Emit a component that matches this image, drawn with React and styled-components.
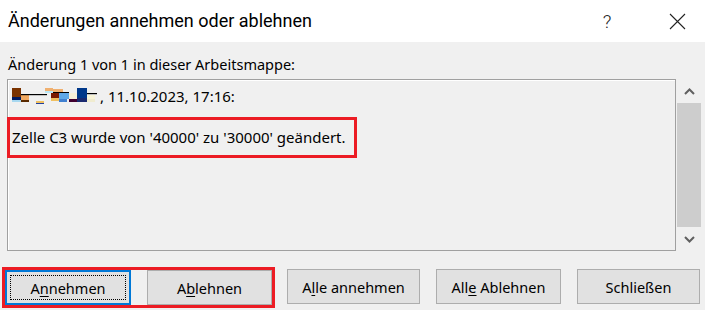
import styled, { createGlobalStyle } from "styled-components";

const GlobalStyle = createGlobalStyle`
    html, body {
        margin: 0;
        padding: 0;
        background: #f0f0f0;
    }
    * {
        box-sizing: border-box;
    }
`;

const RED = "#ec1c24";

const App = () => {
    return (
        <Dialog>
            <GlobalStyle />
            <TitleBar>
                <Title>Änderungen annehmen oder ablehnen</Title>
                <CaptionButtons>
                    <CaptionButton>?</CaptionButton>
                    <CaptionButton>
                        <svg width="17" height="17" viewBox="0 0 17 17">
                            <path d="M1 1 L16 16 M16 1 L1 16" stroke="#222" strokeWidth="1.1" fill="none" />
                        </svg>
                    </CaptionButton>
                </CaptionButtons>
            </TitleBar>

            <Body>
                <Label>Änderung 1 von 1 in dieser Arbeitsmappe:</Label>
                <ListArea>
                    <ChangeBox>
                        <AuthorLine>
                            <Redacted />
                            <span>, 11.10.2023, 17:16:</span>
                        </AuthorLine>
                        <Highlight>Zelle C3 wurde von '40000' zu '30000' geändert.</Highlight>
                    </ChangeBox>
                    <ScrollBar>
                        <ArrowButton>
                            <svg width="11" height="7" viewBox="0 0 11 7">
                                <path d="M1 6 L5.5 1.5 L10 6" stroke="#606060" strokeWidth="2" fill="none" />
                            </svg>
                        </ArrowButton>
                        <Thumb />
                        <ArrowButton>
                            <svg width="11" height="7" viewBox="0 0 11 7">
                                <path d="M1 1 L5.5 5.5 L10 1" stroke="#606060" strokeWidth="2" fill="none" />
                            </svg>
                        </ArrowButton>
                    </ScrollBar>
                </ListArea>

                <ButtonRow>
                    <MarkedGroup>
                        <Button $w={126} $focused>
                            A<u>n</u>nehmen
                        </Button>
                        <Button $w={125}>
                            A<u>b</u>lehnen
                        </Button>
                    </MarkedGroup>
                    <Button $w={133} $ml={12} $top={2}>
                        A<u>l</u>le annehmen
                    </Button>
                    <Button $w={125} $ml={16} $top={2}>
                        All<u>e</u> Ablehnen
                    </Button>
                    <Button $w={123} $ml={16} $top={2}>
                        Schließen
                    </Button>
                </ButtonRow>
            </Body>
        </Dialog>
    );
};

// pixelated, censored author name
const Redacted = () => (
    <RedactedSvg width="88" height="16" viewBox="0 0 88 16">
        <rect x="0" y="0" width="9" height="9" fill="#7a3300" />
        <rect x="0" y="9" width="9" height="3" fill="#001a60" />
        <rect x="0" y="12" width="9" height="2" fill="#a8d8f0" />
        <rect x="9" y="6" width="8" height="6" fill="#f0a860" />
        <rect x="9" y="12" width="8" height="2" fill="#5a2a00" />
        <rect x="9" y="6" width="26" height="1.2" fill="#000" />
        <rect x="24" y="13" width="8" height="2" fill="#f0c060" />
        <rect x="24" y="15" width="8" height="1" fill="#2040a0" />
        <rect x="33" y="0" width="8" height="3" fill="#f0b070" />
        <rect x="33" y="3" width="8" height="2" fill="#b8e8f8" />
        <rect x="41" y="1" width="10" height="3" fill="#f0b070" />
        <rect x="41" y="4" width="16" height="1.2" fill="#000" />
        <rect x="39" y="5" width="8" height="5" fill="#7a1a00" />
        <rect x="47" y="5" width="10" height="6" fill="#60a8e8" />
        <rect x="39" y="10" width="8" height="3" fill="#f0c060" />
        <rect x="47" y="11" width="8" height="3" fill="#4080d0" />
        <rect x="57" y="5" width="8" height="6" fill="#f8f0d8" />
        <rect x="57" y="11" width="8" height="3" fill="#400030" />
        <rect x="65" y="0" width="10" height="10" fill="#00388a" />
        <rect x="65" y="10" width="10" height="4" fill="#1a2a70" />
        <rect x="75" y="5" width="10" height="1.2" fill="#000" />
        <rect x="75" y="7" width="8" height="4" fill="#f8f4d8" />
        <rect x="75" y="11" width="8" height="3" fill="#f0ecd0" />
    </RedactedSvg>
);

const Dialog = styled.div`
    width: 705px;
    height: 310px;
    background: #f0f0f0;
    font-family: "Segoe UI", "Noto Sans", sans-serif;
    color: #000;
    overflow: hidden;
`;

const TitleBar = styled.div`
    height: 42px;
    background: #ffffff;
    display: flex;
    align-items: center;
    justify-content: space-between;
    padding-left: 8px;
`;

const Title = styled.div`
    font-family: "Roboto", sans-serif;
    font-size: 18px;
    font-weight: 400;
    color: #000;
    white-space: nowrap;
    padding-bottom: 2px;
`;

const CaptionButtons = styled.div`
    display: flex;
    gap: 24px;
    padding-right: 5px;
`;

const CaptionButton = styled.div`
    width: 46px;
    height: 40px;
    display: flex;
    align-items: center;
    justify-content: center;
    font-family: "Roboto", sans-serif;
    font-weight: 300;
    font-size: 19px;
    color: #222;
`;

const Body = styled.div`
    padding: 0 4px 0 2px;
`;

const Label = styled.div`
    font-size: 14.5px;
    line-height: 20px;
    padding: 12px 0 0 6px;
    height: 37px;
`;

const ListArea = styled.div`
    display: flex;
    gap: 1px;
    padding-left: 5px;
    height: 172px;
`;

const ChangeBox = styled.div`
    width: 670px;
    height: 172px;
    border: 1px solid #a0a0a0;
    box-shadow: inset 1px 1px 0 #ffffff;
    padding-top: 7px;
`;

const AuthorLine = styled.div`
    display: flex;
    align-items: center;
    height: 17px;
    padding-left: 4px;
    font-size: 15px;
`;

const RedactedSvg = styled.svg`
    display: block;
`;

const Highlight = styled.div`
    display: inline-block;
    margin: 13px 0 0 -1px;
    border: 3px solid ${RED};
    padding: 0 8px 0 2px;
    height: 41px;
    line-height: 35px;
    font-size: 15px;
`;

const ScrollBar = styled.div`
    width: 24px;
    display: flex;
    flex-direction: column;
`;

const ArrowButton = styled.div`
    height: 24px;
    display: flex;
    align-items: center;
    justify-content: center;
`;

const Thumb = styled.div`
    flex: 1;
    background: #cdcdcd;
`;

const ButtonRow = styled.div`
    display: flex;
    align-items: flex-start;
    margin-top: 16px;
`;

const MarkedGroup = styled.div`
    display: flex;
    gap: 16px;
    border: 3px solid ${RED};
    height: 41px;
`;

const Button = styled.button`
    position: relative;
    flex: none;
    width: ${(p) => p.$w}px;
    height: 35px;
    margin-top: ${(p) => p.$top || 0}px;
    margin-left: ${(p) => p.$ml || 0}px;
    background: #e1e1e1;
    border: ${(p) => (p.$focused ? "2px solid #0078d7" : "1px solid #adadad")};
    font-family: "Segoe UI", "Noto Sans", sans-serif;
    font-size: 14.5px;
    color: #000;
    padding: 0;
    u {
        text-decoration-thickness: 1px;
        text-underline-offset: 2px;
    }
    ${(p) =>
        p.$focused &&
        `
        &::after {
            content: "";
            position: absolute;
            inset: 3px;
            border: 1px dotted #000;
        }
    `}
`;

export default App;
